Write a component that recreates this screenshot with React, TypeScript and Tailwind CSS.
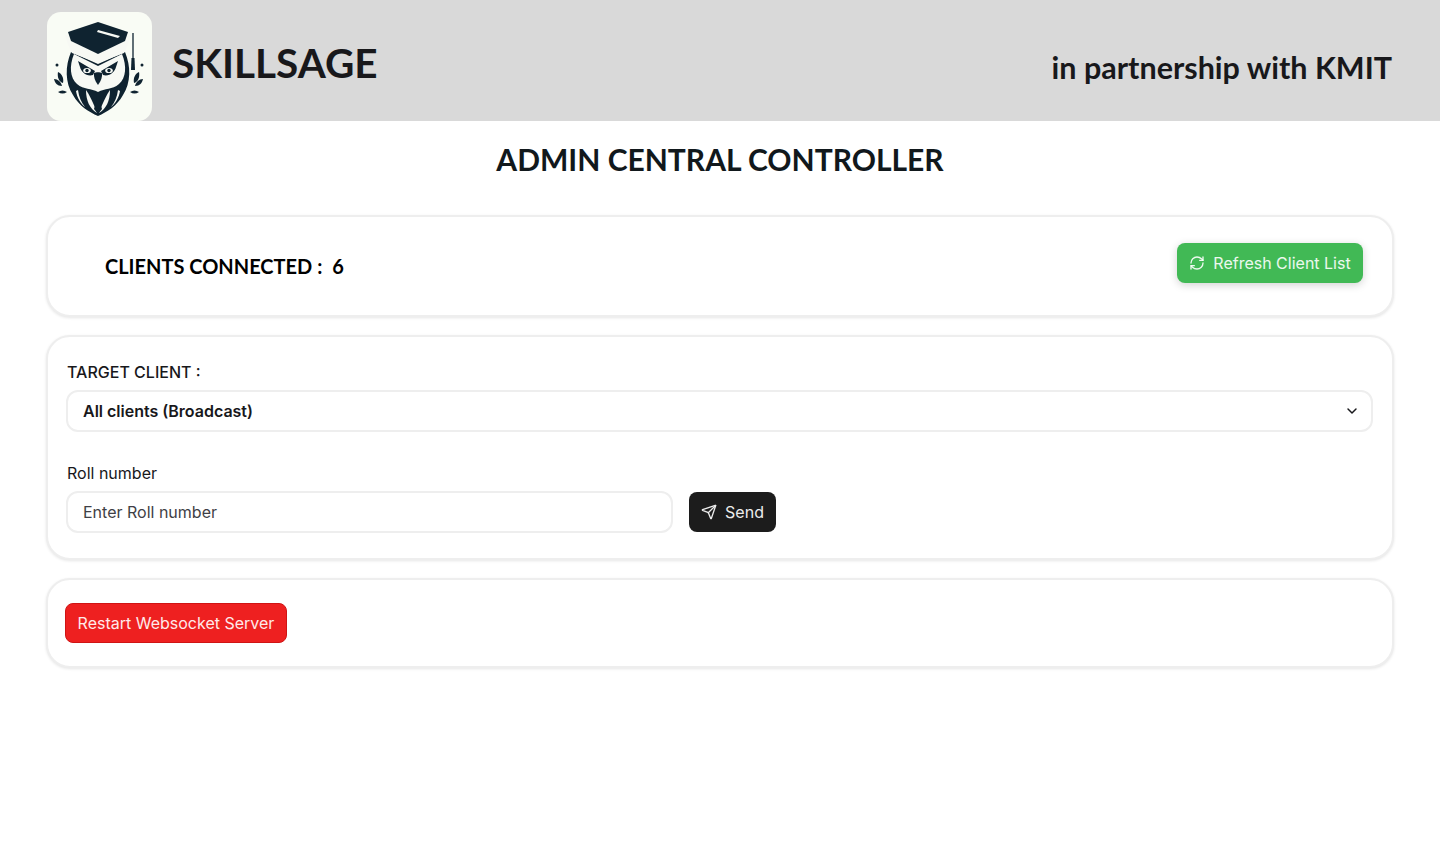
import React from 'react';
import { ChevronDown, RefreshCw, Send } from 'lucide-react';

const heading = "font-['Lato',sans-serif]";

function OwlLogo() {
    return (
        <svg viewBox="0 0 105 109" className="w-[105px] h-[109px]">
            {/* head */}
            <path d="M24 40 C18 54 18 71 26 83 C32 94 42 100 51 104 C60 100 70 94 76 83 C84 71 84 54 78 40 L51 52 Z" fill="#0f2330" />
            {/* face */}
            <path d="M27 42 L51 54 L75 42 C80 54 79 66 72 72 C65 78 58 76 51 80 C44 76 37 78 30 72 C23 66 22 54 27 42 Z" fill="#f7f9f4" />
            {/* brows and eyes */}
            <path d="M31 49 L48 59 L46 63 C40 65 34 60 33 55 Z" fill="#0f2330" />
            <path d="M71 49 L54 59 L56 63 C62 65 68 60 69 55 Z" fill="#0f2330" />
            <ellipse cx="40" cy="58.5" rx="3.8" ry="2.6" fill="#f7f9f4" />
            <ellipse cx="62" cy="58.5" rx="3.8" ry="2.6" fill="#f7f9f4" />
            <circle cx="40" cy="58.5" r="1.7" fill="#0f2330" />
            <circle cx="62" cy="58.5" r="1.7" fill="#0f2330" />
            <path d="M47 61 C49 60 53 60 55 61 C55.5 65 54 69 51 73 C48 69 46.5 65 47 61 Z" fill="#0f2330" />
            {/* chest */}
            <path d="M39 78 C42 82 46 90 50 101 C43 97 39 89 39 78 Z" fill="#f7f9f4" />
            <path d="M63 78 C60 82 56 90 52 101 C59 97 63 89 63 78 Z" fill="#f7f9f4" />
            <path d="M31 78 C32 85 34 90 38 95 C34 92 30 86 29 79 Z" fill="#f7f9f4" />
            <path d="M71 78 C70 85 68 90 64 95 C68 92 72 86 73 79 Z" fill="#f7f9f4" />
            <path d="M49 84 L53 84 L52.6 89 L55 97 L51 102 L47 97 L49.4 89 Z" fill="#0f2330" />
            {/* cap */}
            <path d="M18 23 C20 30 22 35 25 41 L51 51 L77 41 C80 35 82 30 84 23 L51 30 Z" fill="#f7f9f4" />
            <path d="M51 10 L21 20 L24 29 L51 42 L78 29 L81 20 Z" fill="#0f2330" />
            <path d="M51 18 L73 24 L71 26 L50 20 Z" fill="#f7f9f4" />
            <path d="M86 21 L86 46" stroke="#0f2330" strokeWidth="1.3" />
            <path d="M84.5 46 L87.5 46 L88 58 L84 58 Z" fill="#0f2330" />
            {/* laurels */}
            <circle cx="10" cy="53" r="1.5" fill="#0f2330" />
            <circle cx="95" cy="53" r="1.5" fill="#0f2330" />
            <path d="M11 60 C15 62 17 66 16 71 C12 70 10 65 11 60 Z" fill="#0f2330" />
            <path d="M7 67 C11 67 14 70 15 74 C10 74 8 71 7 67 Z" fill="#0f2330" />
            <path d="M11 80 C14 78 17 78 20 80 C17 82 14 82 11 80 Z" fill="#0f2330" />
            <path d="M92 60 C88 62 86 66 87 71 C91 70 93 65 92 60 Z" fill="#0f2330" />
            <path d="M96 67 C92 67 89 70 88 74 C93 74 95 71 96 67 Z" fill="#0f2330" />
            <path d="M92 80 C89 78 86 78 83 80 C86 82 89 82 92 80 Z" fill="#0f2330" />
        </svg>
    );
}

function Card({ className, children }: { className: string; children: React.ReactNode }) {
    return (
        <section className={`bg-white border-2 border-[#eeeeee] rounded-3xl shadow-[0_1px_3px_rgba(0,0,0,0.1)] ${className}`}>
            {children}
        </section>
    );
}

export default function App() {
    return (
        <div className="min-h-[858px] bg-white font-['Inter',sans-serif] text-[#18181b]">
            <header className="h-[121px] bg-[#d9d9d9] flex justify-between pl-[47px] pr-[48px]">
                <div className="flex items-start pt-3">
                    <div className="w-[105px] h-[109px] bg-[#f9fcf5] rounded-[14px] overflow-hidden">
                        <OwlLogo />
                    </div>
                    <h1 className={`${heading} ml-5 mt-[26px] text-[40.5px] leading-[50px] font-bold text-[#18181b]`}>SKILLSAGE</h1>
                </div>
                <div className={`${heading} pt-[47px] text-[30.5px] leading-10 font-bold text-[#18181b]`}>in partnership with KMIT</div>
            </header>

            <main className="px-[46px]">
                <h2 className={`${heading} pt-[18px] h-[94px] text-center text-[30px] leading-10 font-bold text-[#11181c]`}>ADMIN CENTRAL CONTROLLER</h2>

                <Card className="h-[102px] flex justify-between pl-[57px] pr-[29px]">
                    <div className={`${heading} pt-[35px] text-[20px] leading-7 font-bold text-black`}>
                        CLIENTS CONNECTED : <span className="ml-[5px]">6</span>
                    </div>
                    <div className="pt-[26px]">
                        <button className="h-10 w-[186px] rounded-lg bg-[#41b955] text-white/90 text-base flex items-center justify-center gap-2 shadow-[0_2px_8px_rgba(0,0,0,0.18)]">
                            <RefreshCw size={16} />
                            Refresh Client List
                        </button>
                    </div>
                </Card>

                <Card className="h-[225px] mt-[18px] pl-[18px] pr-[19px] pt-[23px]">
                    <div className="pl-[1px] text-base leading-6 font-medium">TARGET CLIENT :</div>
                    <div className="mt-[6px] h-[42px] border-2 border-[#eeeeee] rounded-xl flex items-center justify-between pl-[15px] pr-[11px] text-base font-semibold">
                        All clients (Broadcast)
                        <ChevronDown size={16} strokeWidth={2.2} />
                    </div>
                    <div className="pl-[1px] mt-[29px] text-base leading-6">Roll number</div>
                    <div className="mt-[6px] flex items-center gap-4">
                        <div className="w-[607px] h-[42px] border-2 border-[#eeeeee] rounded-xl flex items-center pl-[15px] text-base text-[#3f3f46]">
                            Enter Roll number
                        </div>
                        <button className="h-10 w-[87px] rounded-lg bg-[#1c1c1c] text-[#ececec] text-base flex items-center justify-center gap-2">
                            <Send size={16} />
                            Send
                        </button>
                    </div>
                </Card>

                <Card className="h-[90px] mt-[18px] pl-[17px] pt-[23px]">
                    <button className="h-10 w-[222px] rounded-lg bg-[#ee2020] border border-[#cf1414] text-[#ffe9e9] text-base">
                        Restart Websocket Server
                    </button>
                </Card>
            </main>
        </div>
    );
}
